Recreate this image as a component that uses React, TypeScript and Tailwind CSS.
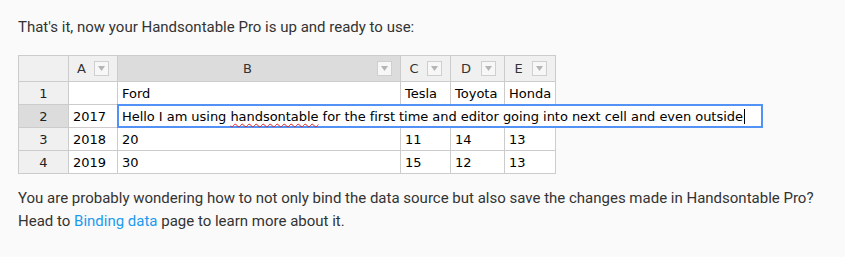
import React from "react";

const cols = [
  { label: "A", w: "w-[49px]" },
  { label: "B", w: "w-[283px]", active: true },
  { label: "C", w: "w-[50px]" },
  { label: "D", w: "w-[54px]" },
  { label: "E", w: "w-[51px]" },
];

const rows = [
  ["", "Ford", "Tesla", "Toyota", "Honda"],
  ["2017", "", "", "", ""],
  ["2018", "20", "11", "14", "13"],
  ["2019", "30", "15", "12", "13"],
];

function DropdownButton() {
  return (
    <span className="mr-[8px] flex h-[15px] w-[15px] shrink-0 items-center justify-center border border-[#cfcfcf] bg-[#f7f7f7]">
      <svg width="7" height="5" viewBox="0 0 7 5">
        <path d="M0 0 L7 0 L3.5 5 Z" fill="#b5b5b5" />
      </svg>
    </span>
  );
}

function Grid() {
  return (
    <div className="relative inline-block border-l border-t border-[#ccc] font-['DejaVu_Sans',sans-serif] text-[13px] text-[#000]">
      <div className="flex h-[26px]">
        <div className="h-full w-[50px] border-b border-r border-[#ccc] bg-[#f0f0f0]" />
        {cols.map((c) => (
          <div
            key={c.label}
            className={`flex h-full items-center border-b border-r border-[#ccc] ${c.w} ${
              c.active ? "bg-[#dcdcdc]" : "bg-[#f0f0f0]"
            }`}
          >
            <span className="flex-1 text-center text-[#333]">{c.label}</span>
            <DropdownButton />
          </div>
        ))}
      </div>
      {rows.map((r, i) => (
        <div key={i} className="flex h-[23px]">
          <div
            className={`flex h-full w-[50px] items-center justify-center border-b border-r border-[#ccc] text-[#222] ${
              i === 1 ? "bg-[#dcdcdc]" : "bg-[#f0f0f0]"
            }`}
          >
            {i + 1}
          </div>
          {r.map((v, j) => (
            <div
              key={j}
              className={`flex h-full items-center overflow-hidden whitespace-nowrap border-b border-r border-[#ccc] bg-white px-[4px] ${cols[j].w}`}
            >
              {v}
            </div>
          ))}
        </div>
      ))}

      {/* cell editor spilling over the neighbouring cells */}
      <div className="absolute left-[98px] top-[48px] flex h-[24px] w-[646px] items-center whitespace-nowrap border-2 border-[#5292f7] bg-white pl-[3px] tracking-[-0.04px]">
        <span>
          Hello I am using{" "}
          <span className="underline decoration-[#e02020] decoration-wavy decoration-1 underline-offset-2">handsontable</span>{" "}
          for the first time and editor going into next cell and even outside
        </span>
        <span className="ml-px inline-block h-[15px] w-px bg-black" />
      </div>
    </div>
  );
}

export default function App() {
  return (
    <div className="min-h-[257px] bg-[#fafafa] px-[18px] pt-[16px] font-['Roboto',sans-serif] text-[15px] leading-[23px] text-[#333]">
      <p>That's it, now your Handsontable Pro is up and ready to use:</p>
      <div className="mt-[16px]">
        <Grid />
      </div>
      <p className="mt-[13px]">
        You are probably wondering how to not only bind the data source but also save the changes made in Handsontable Pro?
        <br />
        Head to <a className="text-[#1a9bef]">Binding data</a> page to learn more about it.
      </p>
    </div>
  );
}
